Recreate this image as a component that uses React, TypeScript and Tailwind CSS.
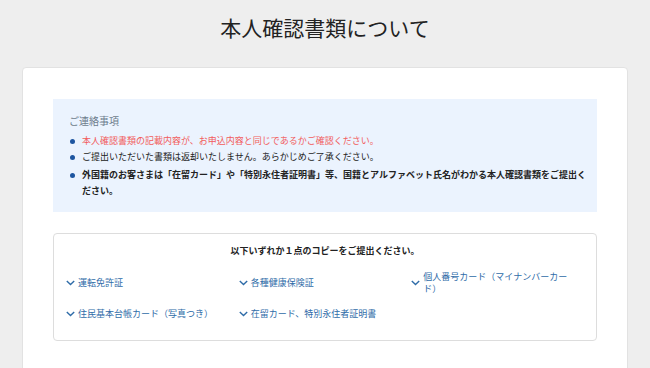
import React from "react";

const Chevron = () => (
  <svg width="9" height="6" viewBox="0 0 9 6" className="shrink-0 mr-[3px]" fill="none">
    <path d="M0.8 1 L4.5 4.6 L8.2 1" stroke="#2f6ca8" strokeWidth="1.4" />
  </svg>
);

const items = [
  "運転免許証",
  "各種健康保険証",
  "個人番号カード（マイナンバーカード）",
  "住民基本台帳カード（写真つき）",
  "在留カード、特別永住者証明書",
];

const Dot = () => (
  <span className="w-[13px] shrink-0 flex items-center h-[16px]">
    <span className="block w-[5px] h-[5px] rounded-full bg-[#1d55a0] ml-[1px]" />
  </span>
);

export default function App() {
  return (
    <div
      className="min-h-[368px] bg-[#eeeeee] text-[#222]"
      style={{ fontFamily: '"Noto Sans CJK JP", "Noto Sans", sans-serif' }}
    >
      <h1 className="pt-[12px] text-center text-[21px] leading-[30px] font-normal text-[#222]">
        本人確認書類について
      </h1>
      <div className="mx-[22px] mt-[25px] bg-white rounded-[4px] border border-[#e2e2e2] px-[30px] pt-[31px] pb-[30px]">
        <div className="bg-[#ebf3fe] pl-[16px] pr-[10px] pt-[14px] pb-[13px]">
          <div className="text-[10px] leading-[16px] text-[#6d7c8c] mb-[4px]">ご連絡事項</div>
          <ul className="text-[9px] leading-[16px]">
            <li className="flex text-[#f25c5c]">
              <Dot />
              <span>本人確認書類の記載内容が、お申込内容と同じであるかご確認ください。</span>
            </li>
            <li className="flex">
              <Dot />
              <span>ご提出いただいた書類は返却いたしません。あらかじめご了承ください。</span>
            </li>
            <li className="flex font-bold mt-[2px]">
              <Dot />
              <span>
                外国籍のお客さまは「在留カード」や「特別永住者証明書」等、国籍とアルファベット氏名がわかる本人確認書類をご提出ください。
              </span>
            </li>
          </ul>
        </div>
        <div className="mt-[21px] border border-[#dddddd] rounded-[4px] px-[12px] pt-[9px] pb-[20px]">
          <div className="text-center text-[9px] leading-[16px] font-bold">
            以下いずれか１点のコピーをご提出ください。
          </div>
          <div className="grid grid-cols-3 gap-y-[13px] mt-[12px]">
            {items.map((t) => (
              <div key={t} className="flex items-center pr-[12px]">
                <Chevron />
                <span className="text-[9px] leading-[12px] text-[#2f6ca8]">{t}</span>
              </div>
            ))}
          </div>
        </div>
      </div>
    </div>
  );
}
